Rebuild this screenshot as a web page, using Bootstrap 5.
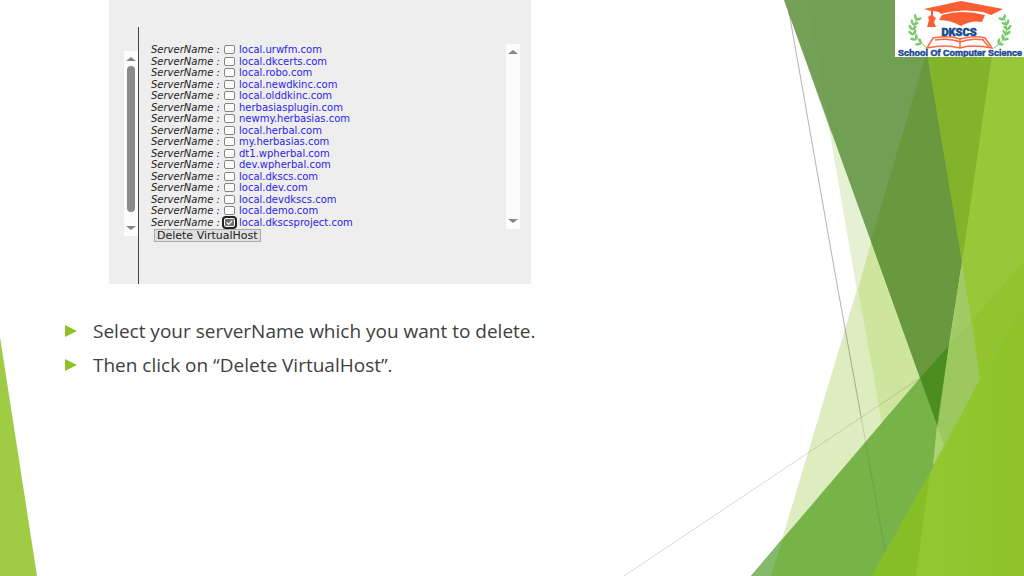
<!DOCTYPE html>
<html lang="en">
<head>
<meta charset="utf-8">
<meta name="viewport" content="width=device-width, initial-scale=1">
<title>Delete VirtualHost</title>
<link href="https://cdn.jsdelivr.net/npm/bootstrap@5.3.0/dist/css/bootstrap.min.css" rel="stylesheet">
<style>
  body { font-family: "Open Sans", sans-serif; color: #404040; background: #fff; }
  .facets { z-index: -1; }
  .host-panel { width: 422px; min-height: 284px; margin-left: 109px; background: #eee; color: #222; font-family: "DejaVu Sans", sans-serif; font-size: 10px; line-height: 11px; }
  .side-pane { width: 30px; padding-top: 24px; margin-top: 27px; border-right: 1px solid #444; }
  .scroll-track { width: 14px; height: 185px; padding: 6px 0; background: #fcfcfc; }
  .right-track { margin: 44px 11px 0 0; }
  .scroll-thumb { width: 8px; height: 146px; margin-bottom: 10px; border-radius: 4px; background: #8b8b8b; }
  .arrow-up, .arrow-down { border: 5px solid transparent; border-top-width: 0; border-bottom: 4px solid #858585; }
  .arrow-down { border-bottom-width: 0; border-top: 4px solid #858585; }
  .host-form { padding: 44px 0 0 12px; }
  .host-list { height: 184px; margin-bottom: 1px; grid-template-rows: repeat(16, 1fr); }
  .host-row label { color: #2a1fe8; }
  .host-key { width: 72px; font-style: italic; }
  .host-check { appearance: none; width: 11px; height: 9px; margin: 0 4px 0 1px; border: 1px solid #858585; border-radius: 2px; background: #fff; }
  .host-check:checked { outline: 2px solid #222; border-color: #fff; background: #707070 url("data:image/svg+xml,%3Csvg xmlns='http://www.w3.org/2000/svg' viewBox='0 0 11 9'%3E%3Cpath d='M2 4.5 4.5 7 9 2' fill='none' stroke='white' stroke-width='1.6'/%3E%3C/svg%3E") center / contain no-repeat; }
  .delete-btn { height: 13px; margin-left: 3px; padding: 0 2px; border: 1px solid #aaa; background: #e0e0e0; color: #222; font: 11px/11px "DejaVu Sans", sans-serif; }
  .logo-box { width: 129px; height: 57px; }
  .steps { margin: 30px 0 0 65px; font-size: 19px; line-height: 34px; }
  .steps li { gap: 16px; }
  .steps svg { width: 12px; height: 12px; }
</style>
</head>
<body class="position-relative min-vh-100 overflow-hidden">
<svg class="facets position-absolute top-0 start-0 w-100 h-100" viewBox="0 0 1024 576" preserveAspectRatio="none" aria-hidden="true">
  <defs><linearGradient id="lime" gradientUnits="userSpaceOnUse" x1="930" y1="0" x2="1010" y2="0"><stop stop-color="#94c832"/><stop offset="1" stop-color="#8fc329"/></linearGradient></defs>
  <path fill="#9fcb45" d="M0 337 37 576H0z"/>
  <path fill="#e6f1d3" d="M807 0H1024V576H906z"/>
  <path fill="#deedc0" d="M858 286 771 576H940V286z"/>
  <path fill="#cde59d" d="M871 243 858 289 882 423 908 576H1000V243z"/>
  <path fill="#719f53" d="M784 0H927L962 262 937 425z"/>
  <path fill="#77a35c" opacity=".5" d="M784 0H807L832 135z"/>
  <path fill="#6a983f" d="M942 0 871 241 937 425 962 262 918 0z"/>
  <path fill="#82b32b" d="M918 0H1024V290L962 262z"/>
  <path fill="#78b34a" d="M751 576 920 378 949 345 1024 262V576z"/>
  <path fill="#82b96a" d="M751 576 783 538 771 576z"/>
  <path fill="#4b8d20" d="M920 378 949 345 937 425z"/>
  <path fill="#a1cc65" d="M962 262 1000 262V400L933 465 949 345z"/>
  <path fill="#9cc85f" d="M949 345 973 319 990 390 933 465z"/>
  <path fill="#aad46e" d="M937 425 944 445 933 465z"/>
  <path fill="#a1cc65" d="M962 262 973 319 949 345z"/>
  <path fill="#99c73a" d="M1000 0H1024V306L980 379 962 262z"/>
  <path fill="#92c42f" d="M973 319 1024 262V306L980 379z"/>
  <path fill="url(#lime)" d="M872 576 930 473 980 379 1024 306V576z"/>
  <path fill="#87be27" d="M872 576 930 473 916 576z"/>
  <g fill="none" stroke="#555" stroke-width="1">
    <path opacity=".45" d="M789 12 838 290 861 416"/>
    <path opacity=".22" d="M861 416 885 551M624 576 920 378"/>
  </g>
</svg>

<header class="d-flex justify-content-between align-items-start">
  <section class="host-panel d-flex" aria-label="Virtual hosts">
    <div class="side-pane d-flex justify-content-end align-items-start">
      <div class="scroll-track d-flex flex-column align-items-center justify-content-between">
        <span class="arrow-up"></span><span class="scroll-thumb"></span><span class="arrow-down"></span>
      </div>
    </div>
    <form class="host-form flex-grow-1">
      <div class="host-list d-grid" id="hosts"></div>
      <button type="button" class="delete-btn d-block">Delete VirtualHost</button>
    </form>
    <div class="scroll-track d-flex flex-column align-items-center justify-content-between right-track">
      <span class="arrow-up"></span><span class="arrow-down"></span>
    </div>
  </section>
  <svg class="logo-box flex-shrink-0" viewBox="0 0 129 57" role="img" aria-label="DKSCS School Of Computer Science">
    <path fill="#fff" d="M0 0h129v57H0z"/>
    <path fill="#fc5e33" d="M29 9 66 1 108 9 96 15 88 12Q65 8 46 14L44 12 38 11V16L41 18 39 22 41 27H32L34 20 33 17 36 15V11z"/>
    <path fill="#fc5e33" d="M47 15Q66 9 90 15L87 22Q76 20 66 26 56 20 44 20z"/>
    <g fill="#fff" stroke="#fc6a45" stroke-width="1.5"><path d="M38 38Q54 35 65 39 80 35 90 38L97 48Q77 44 65 48 50 44 32 48z"/><path d="M40 40Q55 38 65 42 76 38 89 40M65 39V48M87 39 94 47"/></g>
    <g fill="none" stroke="#75c86b" stroke-width="1"><path d="M22 18Q13 35 32 48M108 17Q119 34 99 48"/></g>
    <g fill="#75c86b" id="laurel"></g>
    <g fill="#194991" stroke="#194991" stroke-width=".5" font-weight="900" text-anchor="middle">
      <text x="64" y="36" font-size="11" font-family="Roboto, sans-serif">DKSCS</text>
      <text x="65" y="56" font-size="9" font-family="Liberation Sans, sans-serif">School Of Computer Science</text>
    </g>
  </svg>
</header>

<main>
  <ul class="steps list-unstyled">
    <li class="d-flex align-items-center"><svg viewBox="0 0 12 12" aria-hidden="true"><path fill="#90c226" d="M0 0 12 6 0 12z"/></svg><span>Select your serverName which you want to delete.</span></li>
    <li class="d-flex align-items-center"><svg viewBox="0 0 12 12" aria-hidden="true"><path fill="#90c226" d="M0 0 12 6 0 12z"/></svg><span>Then click on “Delete VirtualHost”.</span></li>
  </ul>
</main>

<script src="https://cdn.jsdelivr.net/npm/bootstrap@5.3.0/dist/js/bootstrap.bundle.min.js"></script>
<script>
  const hosts = ["local.urwfm.com", "local.dkcerts.com", "local.robo.com", "local.newdkinc.com", "local.olddkinc.com", "herbasiasplugin.com", "newmy.herbasias.com", "local.herbal.com", "my.herbasias.com", "dt1.wpherbal.com", "dev.wpherbal.com", "local.dkscs.com", "local.dev.com", "local.devdkscs.com", "local.demo.com", "local.dkscsproject.com"];
  document.getElementById("hosts").innerHTML = hosts.map((h, i) =>
    `<div class="host-row d-flex align-items-center"><span class="host-key">ServerName :</span><input class="host-check" type="checkbox" id="host${i}"${i === 15 ? " checked" : ""}><label for="host${i}">${h}</label></div>`).join("");
  // Laurel leaves: pairs along each branch
  const leaves = [[21,20,-60],[18,25,-65],[17,30,-80],[18,35,-100],[21,40,-125],[26,44,-145],[109,20,-120],[112,25,-115],[113,30,-100],[111,35,-80],[108,40,-55],[103,44,-35]];
  document.getElementById("laurel").innerHTML = leaves.map(([x, y, a]) =>
    [-40, 40].map(d => `<ellipse cx="3" cy="0" rx="3" ry="1.3" transform="translate(${x} ${y}) rotate(${a + d})"/>`).join("")).join("");
</script>
</body>
</html>
